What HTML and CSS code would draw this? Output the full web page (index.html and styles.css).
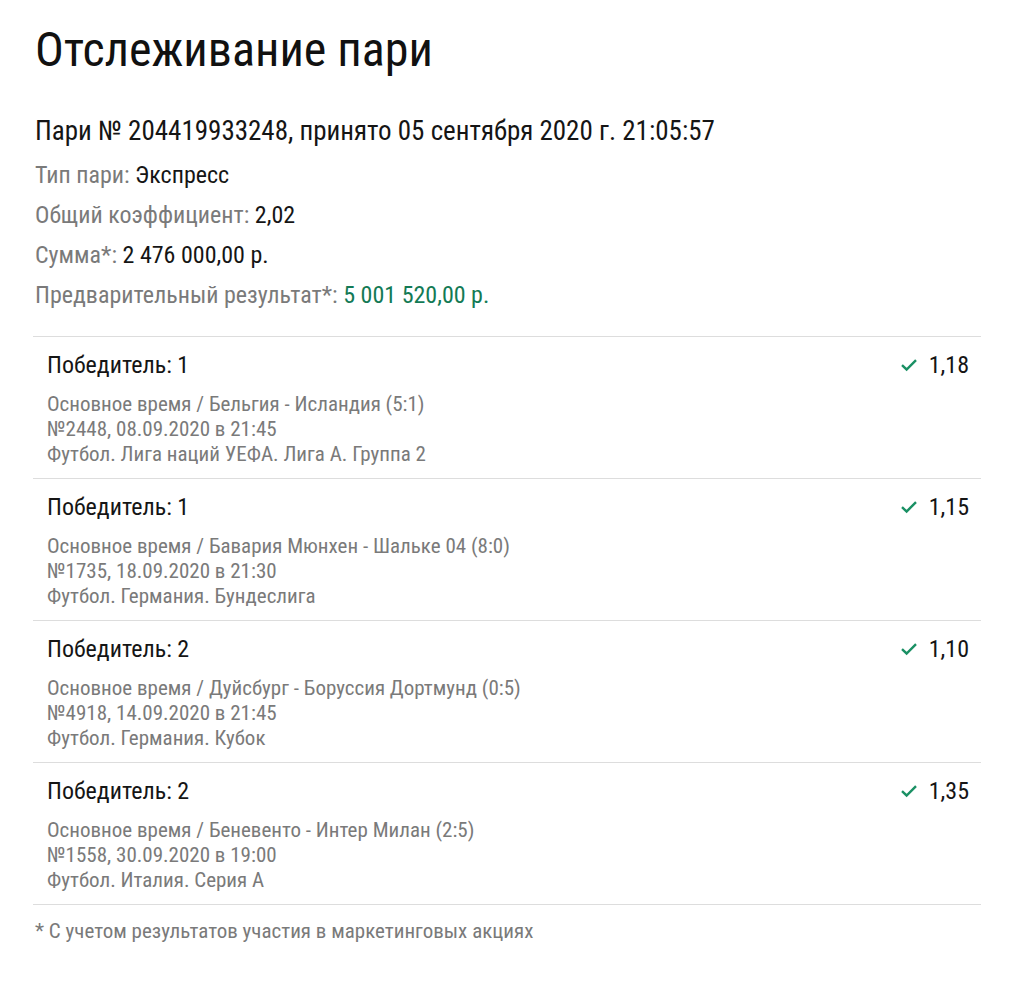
FILE: index.html
```
<!DOCTYPE html>
<html lang="ru">
<head>
    <meta charset="UTF-8">
    <meta name="viewport" content="width=device-width, initial-scale=1.0">
    <title>Отслеживание пари</title>
    <link rel="stylesheet" href="styles.css">
</head>
<body>
    <div class="page">
        <h1 class="title">Отслеживание пари</h1>

        <div class="bet-head">Пари № 204419933248, принято 05 сентября 2020 г. 21:05:57</div>

        <div class="info">
            <div class="info-row"><span class="label">Тип пари:</span> Экспресс</div>
            <div class="info-row"><span class="label">Общий коэффициент:</span> 2,02</div>
            <div class="info-row"><span class="label">Сумма*:</span> 2 476 000,00 р.</div>
            <div class="info-row"><span class="label">Предварительный результат*:</span> <span class="win">5 001 520,00 р.</span></div>
        </div>

        <div class="events">
            <div class="event">
                <div class="event-top">
                    <div class="outcome">Победитель: 1</div>
                    <div class="odds">
                        <svg class="check" viewBox="0 0 16 16" width="16" height="16"><path d="M1 8.2l4.6 4.3L15 3.2" fill="none" stroke="currentColor" stroke-width="2.4"/></svg>
                        1,18
                    </div>
                </div>
                <div class="event-info">
                    <div>Основное время / Бельгия - Исландия (5:1)</div>
                    <div>№2448, 08.09.2020 в 21:45</div>
                    <div>Футбол. Лига наций УЕФА. Лига А. Группа 2</div>
                </div>
            </div>

            <div class="event">
                <div class="event-top">
                    <div class="outcome">Победитель: 1</div>
                    <div class="odds">
                        <svg class="check" viewBox="0 0 16 16" width="16" height="16"><path d="M1 8.2l4.6 4.3L15 3.2" fill="none" stroke="currentColor" stroke-width="2.4"/></svg>
                        1,15
                    </div>
                </div>
                <div class="event-info">
                    <div>Основное время / Бавария Мюнхен - Шальке 04 (8:0)</div>
                    <div>№1735, 18.09.2020 в 21:30</div>
                    <div>Футбол. Германия. Бундеслига</div>
                </div>
            </div>

            <div class="event">
                <div class="event-top">
                    <div class="outcome">Победитель: 2</div>
                    <div class="odds">
                        <svg class="check" viewBox="0 0 16 16" width="16" height="16"><path d="M1 8.2l4.6 4.3L15 3.2" fill="none" stroke="currentColor" stroke-width="2.4"/></svg>
                        1,10
                    </div>
                </div>
                <div class="event-info">
                    <div>Основное время / Дуйсбург - Боруссия Дортмунд (0:5)</div>
                    <div>№4918, 14.09.2020 в 21:45</div>
                    <div>Футбол. Германия. Кубок</div>
                </div>
            </div>

            <div class="event">
                <div class="event-top">
                    <div class="outcome">Победитель: 2</div>
                    <div class="odds">
                        <svg class="check" viewBox="0 0 16 16" width="16" height="16"><path d="M1 8.2l4.6 4.3L15 3.2" fill="none" stroke="currentColor" stroke-width="2.4"/></svg>
                        1,35
                    </div>
                </div>
                <div class="event-info">
                    <div>Основное время / Беневенто - Интер Милан (2:5)</div>
                    <div>№1558, 30.09.2020 в 19:00</div>
                    <div>Футбол. Италия. Серия А</div>
                </div>
            </div>
        </div>

        <div class="note">* С учетом результатов участия в маркетинговых акциях</div>
    </div>
</body>
</html>
```

FILE: styles.css
```
body {
    margin: 0;
    background: #fff;
    font-family: Roboto, "Liberation Sans", sans-serif;
    font-stretch: 87.5%;
    color: #151515;
}
.page {
    padding: 22px 36px 40px 33px;
}
.title {
    margin: 0 0 0 2px;
    font-size: 48px;
    font-weight: 400;
    line-height: 56px;
    color: #111;
}
.bet-head {
    margin: 38px 0 0 2px;
    font-size: 27px;
    line-height: 30px;
}
.info {
    margin: 9px 0 0 2px;
    font-size: 24px;
}
.info-row {
    line-height: 40px;
}
.label {
    color: #7a7a7a;
}
.win {
    color: #137a55;
}
.events {
    margin-top: 21px;
    border-top: 1px solid #dddddd;
}
.event {
    padding: 13px 12px 11px 14px;
    border-bottom: 1px solid #dddddd;
}
.event-top {
    display: flex;
    justify-content: space-between;
    align-items: center;
    font-size: 24px;
    line-height: 30px;
}
.odds {
    display: flex;
    align-items: center;
    gap: 12px;
}
.check {
    color: #1a9064;
}
.event-info {
    margin-top: 12px;
    font-size: 21px;
    line-height: 25px;
    color: #7a7a7a;
}
.note {
    margin: 13px 0 0 2px;
    font-size: 21px;
    line-height: 26px;
    color: #7a7a7a;
}
```
